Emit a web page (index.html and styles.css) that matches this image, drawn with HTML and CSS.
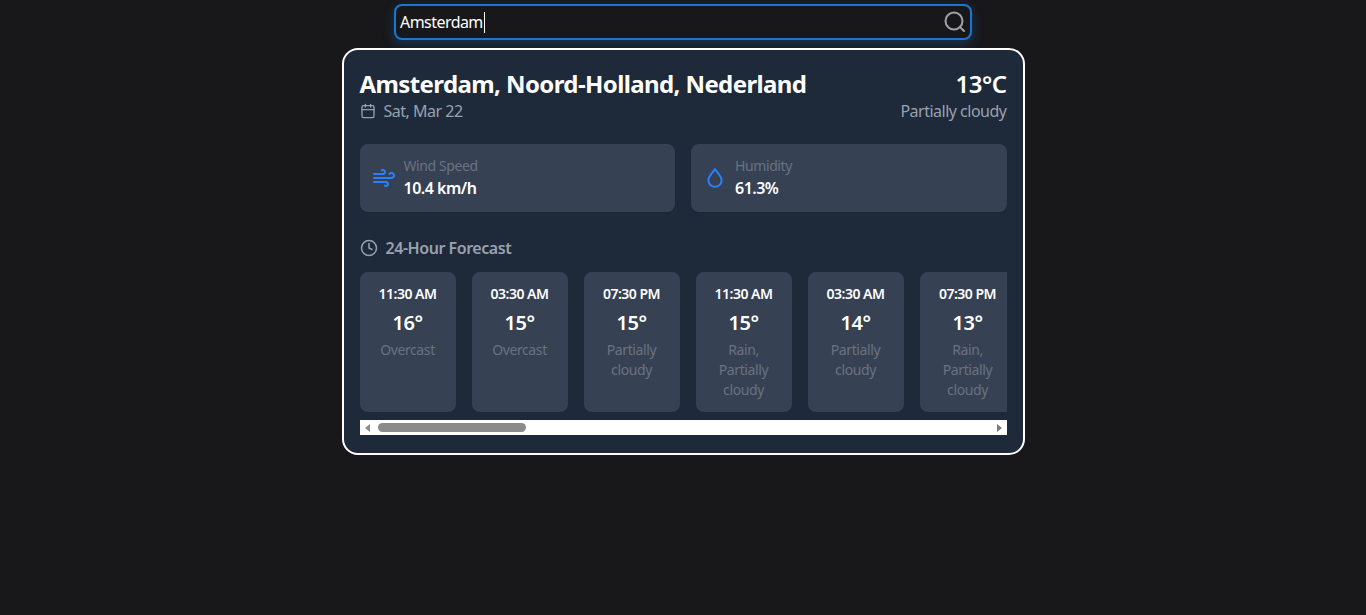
FILE: index.html
```html
<!DOCTYPE html>
<html lang="en">
<head>
<meta charset="utf-8">
<title>Weather</title>
<link rel="stylesheet" href="styles.css">
</head>
<body>
<main class="app">
  <div class="search">
    <div class="search-text">Amsterdam<span class="caret"></span></div>
    <svg class="search-icon" viewBox="0 0 24 24" fill="none" stroke="currentColor" stroke-width="2" stroke-linecap="round" stroke-linejoin="round"><circle cx="11" cy="11" r="8.5"/><path d="m21 21-3.9-3.9"/></svg>
  </div>
  <section class="card">
    <header class="head">
      <div>
        <h1 class="city">Amsterdam, Noord-Holland, Nederland</h1>
        <div class="date">
          <svg class="date-icon" viewBox="0 0 24 24" fill="none" stroke="currentColor" stroke-width="2" stroke-linecap="round" stroke-linejoin="round"><path d="M8 2v4M16 2v4"/><rect x="3" y="4" width="18" height="18" rx="2"/><path d="M3 10h18"/></svg>
          <span>Sat, Mar 22</span>
        </div>
      </div>
      <div class="now">
        <div class="now-temp">13°C</div>
        <div class="now-cond">Partially cloudy</div>
      </div>
    </header>
    <div class="stats">
      <div class="stat">
        <svg class="stat-icon" viewBox="0 0 24 24" fill="none" stroke="currentColor" stroke-width="2" stroke-linecap="round" stroke-linejoin="round"><path d="M12.8 19.6A2 2 0 1 0 14 16H2"/><path d="M17.5 8a2.5 2.5 0 1 1 2 4H2"/><path d="M9.8 4.4A2 2 0 1 1 11 8H2"/></svg>
        <div><div class="stat-label">Wind Speed</div><div class="stat-value">10.4 km/h</div></div>
      </div>
      <div class="stat">
        <svg class="stat-icon" viewBox="0 0 24 24" fill="none" stroke="currentColor" stroke-width="2" stroke-linecap="round" stroke-linejoin="round"><path d="M12 3l5.2 7.2a6.6 6.6 0 1 1-10.4 0z"/></svg>
        <div><div class="stat-label">Humidity</div><div class="stat-value">61.3%</div></div>
      </div>
    </div>
    <h2 class="fc-title">
      <svg class="fc-icon" viewBox="0 0 24 24" fill="none" stroke="currentColor" stroke-width="2" stroke-linecap="round" stroke-linejoin="round"><circle cx="12" cy="12" r="10"/><path d="M12 6v6l4 2"/></svg>
      <span>24-Hour Forecast</span>
    </h2>
    <div class="hours">
      <div class="hour"><div class="h-time">11:30 AM</div><div class="h-temp">16°</div><div class="h-cond">Overcast</div></div>
      <div class="hour"><div class="h-time">03:30 AM</div><div class="h-temp">15°</div><div class="h-cond">Overcast</div></div>
      <div class="hour"><div class="h-time">07:30 PM</div><div class="h-temp">15°</div><div class="h-cond">Partially cloudy</div></div>
      <div class="hour"><div class="h-time">11:30 AM</div><div class="h-temp">15°</div><div class="h-cond">Rain, Partially cloudy</div></div>
      <div class="hour"><div class="h-time">03:30 AM</div><div class="h-temp">14°</div><div class="h-cond">Partially cloudy</div></div>
      <div class="hour"><div class="h-time">07:30 PM</div><div class="h-temp">13°</div><div class="h-cond">Rain, Partially cloudy</div></div>
    </div>
    <div class="scrollbar">
      <span class="arrow arrow-left"></span>
      <div class="track"><div class="thumb"></div></div>
      <span class="arrow arrow-right"></span>
    </div>
  </section>
</main>
</body>
</html>
```

FILE: styles.css
```css
* { box-sizing: border-box; }
html, body { margin: 0; height: 100%; }
body {
  background: #18181b;
  color: #fff;
  font-family: "Noto Sans", "Open Sans", sans-serif;
  overflow: hidden;
}
.app {
  display: flex;
  flex-direction: column;
  align-items: center;
  padding-top: 4px;
}
.search {
  width: 578px;
  height: 36px;
  border: 2px solid #1976d2;
  border-radius: 8px;
  background: #18181b;
  display: flex;
  align-items: center;
  justify-content: space-between;
  padding: 0 3px 0 4px;
  box-shadow: 0 4px 12px rgba(25, 118, 210, 0.3);
}
.search-text {
  display: flex;
  align-items: center;
  font-size: 16px;
  letter-spacing: -0.55px;
  line-height: 24px;
}
.caret {
  display: inline-block;
  width: 1px;
  height: 21px;
  background: #fff;
  margin-left: 1px;
}
.search-icon { width: 24px; height: 24px; color: #a1a1aa; }
.card {
  width: 683px;
  height: 407px;
  margin-top: 8px;
  border: 2px solid #fff;
  border-radius: 16px;
  background: #1e2939;
  padding: 16px;
}
.head {
  display: flex;
  justify-content: space-between;
  align-items: flex-start;
}
.city {
  margin: 0;
  font-size: 24px;
  line-height: 36px;
  font-weight: 700;
  letter-spacing: -0.6px;
}
.date {
  display: flex;
  align-items: center;
  gap: 8px;
  font-size: 16px;
  line-height: 16px;
  letter-spacing: -0.5px;
  color: #99a1af;
  margin-top: 1px;
}
.date-icon { width: 16px; height: 16px; }
.now { text-align: right; }
.now-temp { font-size: 24px; line-height: 36px; font-weight: 600; letter-spacing: -0.5px; }
.now-cond { font-size: 16px; line-height: 16px; margin-top: 1px; letter-spacing: -0.5px; color: #99a1af; }
.stats {
  display: grid;
  grid-template-columns: 1fr 1fr;
  gap: 16px;
  margin-top: 25px;
}
.stat {
  height: 68px;
  background: #364153;
  border-radius: 8px;
  display: flex;
  align-items: center;
  gap: 8px;
  padding: 0 12px;
  box-shadow: 0 1px 2px rgba(0,0,0,0.05);
}
.stat-icon { width: 24px; height: 24px; color: #2b7fff; flex: none; }
.stat-label { font-size: 14px; line-height: 20px; color: #6a7282; letter-spacing: -0.4px; }
.stat-value { font-size: 16px; line-height: 24px; font-weight: 600; letter-spacing: -0.5px; }
.fc-title {
  margin: 24px 0 0;
  display: flex;
  align-items: center;
  gap: 8px;
  height: 24px;
  font-size: 16px;
  font-weight: 600;
  letter-spacing: -0.45px;
  color: #99a1af;
}
.fc-icon { width: 18px; height: 18px; }
.hours {
  display: flex;
  gap: 16px;
  margin-top: 12px;
  overflow: hidden;
}
.hour {
  flex: none;
  width: 96px;
  height: 140px;
  background: #364153;
  border-radius: 8px;
  padding: 12px 8px;
  text-align: center;
}
.h-time { font-size: 14px; line-height: 20px; font-weight: 600; letter-spacing: -0.5px; }
.h-temp { font-size: 20px; line-height: 28px; font-weight: 600; margin-top: 5px; letter-spacing: -0.5px; }
.h-cond { font-size: 14px; line-height: 20px; color: #6a7282; margin-top: 3px; letter-spacing: -0.4px; }
.scrollbar {
  display: flex;
  align-items: center;
  height: 15px;
  margin-top: 8px;
  background: #fff;
  padding: 0 5px;
}
.arrow { flex: none; width: 0; height: 0; border-style: solid; border-color: transparent; }
.arrow-left { border-width: 4px 5px 4px 0; border-right-color: #8b8b8b; }
.arrow-right { border-width: 4px 0 4px 5px; border-left-color: #7a7a7a; }
.track { flex: 1; padding-left: 8px; }
.thumb { width: 148px; height: 9px; border-radius: 5px; background: #8b8b8b; }
```
